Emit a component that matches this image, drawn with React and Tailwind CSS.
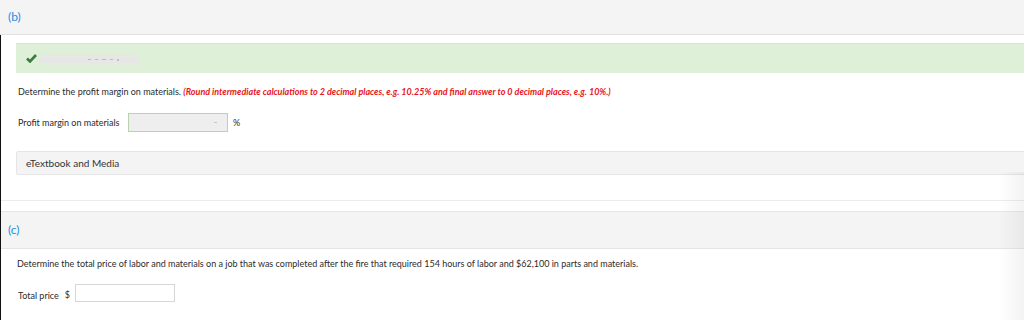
import React from 'react';

const App = () => {
  return (
    <div className="relative w-[1024px] h-[320px] overflow-hidden bg-white font-['Lato','Liberation_Sans',sans-serif] text-[#2b2b2b]">
      {/* Part (b) header */}
      <div className="h-[35px] bg-[#f4f4f4] border-b border-[#e3e3e3] flex items-center pl-[8px]">
        <span className="text-[12px] text-[#1a8fe3]">(b)</span>
      </div>

      <div className="border-l border-[#111]">
        {/* Part (b) body */}
        <div className="pt-[8px] pl-[15px]">
          <div className="h-[30px] bg-[#dff0d8] border-t border-[#d3e8c8] flex items-center pl-[10px]">
            <svg width="11" height="9" viewBox="0 0 11 9" className="shrink-0">
              <path d="M1 4.5 L4 7.5 L10 1" fill="none" stroke="#3b7d3c" strokeWidth="2.6" />
            </svg>
            <div className="relative ml-[1px] h-[14px] w-[104px]">
              <div className="absolute left-[1px] top-[3px] h-[9px] w-[100px] rounded-full bg-[#e6e6e6] blur-[1.5px]" />
              <div className="absolute left-[50px] top-[7px] flex gap-[4px]">
                <span className="h-[1px] w-[3px] bg-[#bdbdbd]" />
                <span className="h-[1px] w-[3px] bg-[#bdbdbd]" />
                <span className="h-[1px] w-[4px] bg-[#bdbdbd]" />
                <span className="h-[1px] w-[3px] bg-[#bdbdbd]" />
                <span className="h-[2px] w-[2px] bg-[#bdbdbd]" />
              </div>
            </div>
          </div>

          <p className="mt-[13px] pl-[2px] text-[9px] leading-[12px]">
            Determine the profit margin on materials.{' '}
            <span className="font-bold italic text-[#e8141c]">
              (Round intermediate calculations to 2 decimal places, e.g. 10.25% and final answer to 0 decimal places, e.g. 10%.)
            </span>
          </p>

          <div className="mt-[15px] pl-[2px] flex items-center text-[9px]">
            <span className="w-[110px]">Profit margin on materials</span>
            <div className="h-[19px] w-[100px] bg-[#eeeeee] border border-[#b9d3b0] flex items-center justify-end pr-[10px]">
              <span className="h-[1px] w-[3px] bg-[#c8c8c8]" />
            </div>
            <span className="ml-[5px]">%</span>
          </div>

          <div className="mt-[19px] -mr-[4px] h-[24px] bg-[#f4f4f4] border border-[#e6e6e6] rounded-l-[2px] flex items-center pl-[9px] text-[10px] text-[#333]">
            eTextbook and Media
          </div>

          <div className="h-[25px]" />
        </div>
        <div className="border-b border-[#ececec]" />

        {/* Part (c) header */}
        <div className="mt-[10px] h-[38px] bg-[#f4f4f4] border-t border-b border-[#e6e6e6] flex items-center pl-[7px]">
          <span className="text-[12px] text-[#1a8fe3]">(c)</span>
        </div>

        {/* Part (c) body */}
        <div className="pl-[16px]">
          <p className="mt-[9px] text-[9px] leading-[12px]">
            Determine the total price of labor and materials on a job that was completed after the fire that required 154 hours of labor and $62,100 in parts and materials.
          </p>
          <div className="mt-[14px] pl-[1px] flex items-start text-[9px] h-[40px]">
            <span className="mt-[5px]">Total price</span>
            <span className="ml-[6px] mt-[4px]">$</span>
            <div className="ml-[5px] h-[18px] w-[100px] bg-white border border-[#d6d6d6]" />
          </div>
        </div>
      </div>

      {/* right edge shadow */}
      <div className="absolute right-0 top-[172px] bottom-0 w-[26px] bg-gradient-to-r from-transparent to-[#0000000c]" />
    </div>
  );
};

export default App;
